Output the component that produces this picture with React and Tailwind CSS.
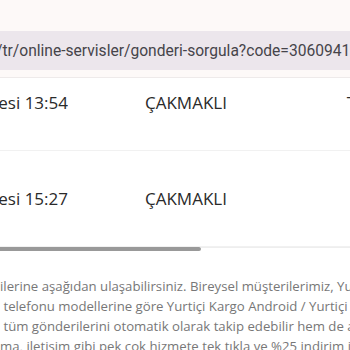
import React from 'react';

const rows = [
  { date: 'Pazartesi 13:54', place: 'ÇAKMAKLI', extra: 'T', h: 'h-[73px] pt-[12px]' },
  { date: 'Cumartesi 15:27', place: 'ÇAKMAKLI', extra: '', h: 'h-[96px] items-center' },
];

const lines = [
  'ilerine aşağıdan ulaşabilirsiniz. Bireysel müşterilerimiz, Yurtiçi',
  ' telefonu modellerine göre Yurtiçi Kargo Android / Yurtiçi Kargo',
  ' tüm gönderilerini otomatik olarak takip edebilir hem de anında',
  'ma, iletişim gibi pek çok hizmete tek tıkla ve %25 indirim ile',
];

export default function App() {
  return (
    <div className="w-[350px] h-[350px] overflow-hidden bg-white flex flex-col">
      {/* browser address bar */}
      <div className="h-[31px] shrink-0 bg-[#fdf9f8]" />
      <div className="h-[39px] shrink-0 bg-[#ece6ec] flex items-center overflow-hidden pt-[2px]">
        <span
          className="whitespace-nowrap -ml-[4px] text-[15.6px] text-[#46444a]"
          style={{ fontFamily: 'Roboto, sans-serif' }}
        >
          /tr/online-servisler/gonderi-sorgula?code=306094123
        </span>
      </div>
      <div className="h-[8px] shrink-0 bg-[#fdf9f8] border-b border-[#eeeaea]" />

      {/* tracking table */}
      <div style={{ fontFamily: '"Open Sans", sans-serif' }} className="text-[#2a2a2a] shrink-0">
        {rows.map((r, i) => (
          <div key={i} className={`${r.h} flex border-b border-[#f1f1f1]`}>
            <div className="w-[68px] h-fit flex justify-end overflow-hidden">
              <span className="whitespace-nowrap text-[17px]">{r.date}</span>
            </div>
            <div className="w-[77px]" />
            <span className="h-fit text-[17px] whitespace-nowrap">{r.place}</span>
            <div className="flex-1" />
            <span className="h-fit text-[17px] -mr-[6px]">{r.extra}</span>
          </div>
        ))}
      </div>

      {/* horizontal scrollbar */}
      <div className="flex items-start h-[5px] shrink-0">
        <div className="w-[201px] h-[4px] bg-[#999] rounded-r-sm" />
        <div className="flex-1 h-[1px] bg-[#eee]" />
      </div>

      {/* description */}
      <div
        className="mt-[24px] flex flex-col text-[13.2px] leading-[20px] text-[#777] whitespace-pre"
        style={{ fontFamily: '"Open Sans", sans-serif' }}
      >
        {lines.map((l, i) => (
          <div key={i}>{l}</div>
        ))}
      </div>
    </div>
  );
}
